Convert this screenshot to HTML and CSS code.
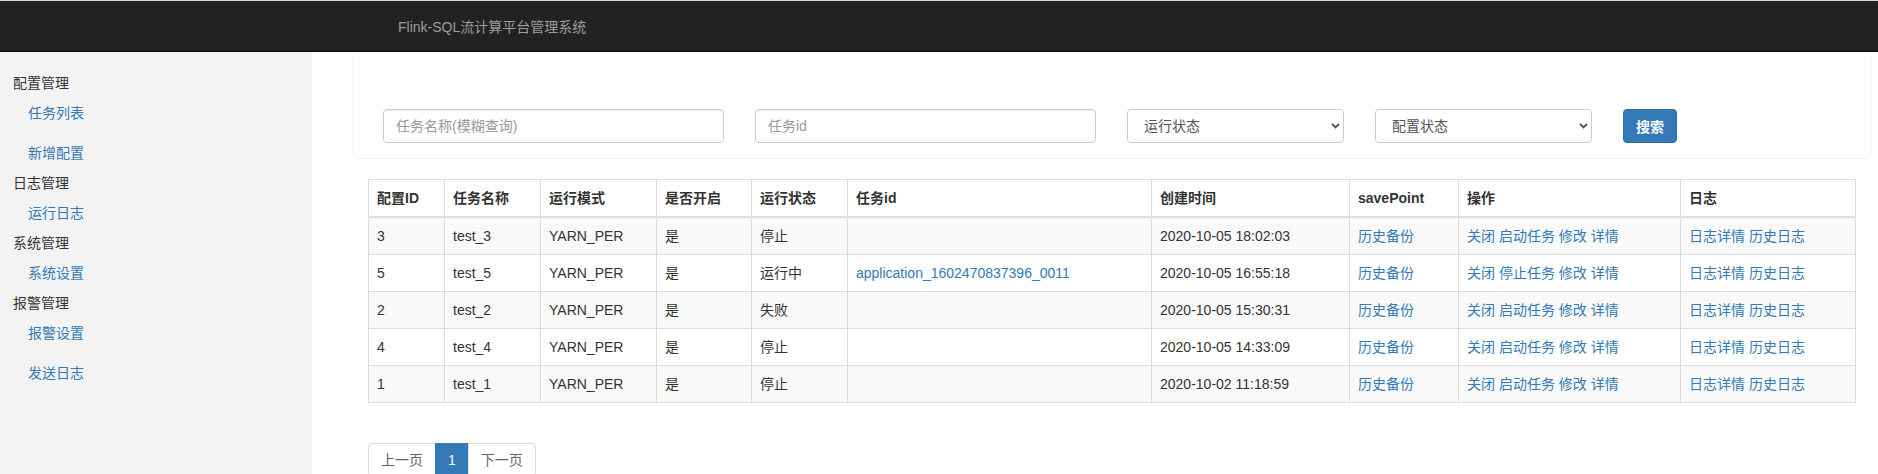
FILE: index.html
```html
<!DOCTYPE html>
<html lang="zh-CN">
<head>
<meta charset="utf-8">
<title>Flink-SQL流计算平台管理系统</title>
<link rel="stylesheet" href="styles.css">
</head>
<body>
<header class="navbar">
  <span class="brand">Flink-SQL流计算平台管理系统</span>
</header>
<div class="layout">
  <aside class="sidebar">
    <div class="group">
      <div class="group-title">配置管理</div>
      <ul class="links">
        <li><a href="#">任务列表</a></li>
        <li><a href="#">新增配置</a></li>
      </ul>
    </div>
    <div class="group">
      <div class="group-title">日志管理</div>
      <ul class="links">
        <li><a href="#">运行日志</a></li>
      </ul>
    </div>
    <div class="group">
      <div class="group-title">系统管理</div>
      <ul class="links">
        <li><a href="#">系统设置</a></li>
      </ul>
    </div>
    <div class="group">
      <div class="group-title">报警管理</div>
      <ul class="links">
        <li><a href="#">报警设置</a></li>
        <li><a href="#">发送日志</a></li>
      </ul>
    </div>
  </aside>
  <main class="main">
    <form class="search-panel">
      <input class="field field-wide" type="text" placeholder="任务名称(模糊查询)">
      <input class="field field-wide" type="text" placeholder="任务id">
      <div class="select-wrap">
        <select class="field field-select"><option>运行状态</option></select>
        <svg class="chevron" width="9" height="6" viewBox="0 0 9 6"><path d="M1 1 L4.5 4.5 L8 1" fill="none" stroke="#555" stroke-width="1.8"/></svg>
      </div>
      <div class="select-wrap">
        <select class="field field-select"><option>配置状态</option></select>
        <svg class="chevron" width="9" height="6" viewBox="0 0 9 6"><path d="M1 1 L4.5 4.5 L8 1" fill="none" stroke="#555" stroke-width="1.8"/></svg>
      </div>
      <button class="btn-primary" type="button">搜索</button>
    </form>

    <table class="task-table">
      <colgroup>
        <col style="width:76px"><col style="width:96px"><col style="width:116px"><col style="width:95px"><col style="width:96px"><col style="width:304px"><col style="width:198px"><col style="width:109px"><col style="width:222px"><col style="width:175px">
      </colgroup>
      <thead>
        <tr><th>配置ID</th><th>任务名称</th><th>运行模式</th><th>是否开启</th><th>运行状态</th><th>任务id</th><th>创建时间</th><th>savePoint</th><th>操作</th><th>日志</th></tr>
      </thead>
      <tbody>
        <tr><td>3</td><td>test_3</td><td>YARN_PER</td><td>是</td><td>停止</td><td></td><td>2020-10-05 18:02:03</td><td><a href="#">历史备份</a></td><td><a href="#">关闭</a> <a href="#">启动任务</a> <a href="#">修改</a> <a href="#">详情</a></td><td><a href="#">日志详情</a> <a href="#">历史日志</a></td></tr>
        <tr><td>5</td><td>test_5</td><td>YARN_PER</td><td>是</td><td>运行中</td><td><a href="#">application_1602470837396_0011</a></td><td>2020-10-05 16:55:18</td><td><a href="#">历史备份</a></td><td><a href="#">关闭</a> <a href="#">停止任务</a> <a href="#">修改</a> <a href="#">详情</a></td><td><a href="#">日志详情</a> <a href="#">历史日志</a></td></tr>
        <tr><td>2</td><td>test_2</td><td>YARN_PER</td><td>是</td><td>失败</td><td></td><td>2020-10-05 15:30:31</td><td><a href="#">历史备份</a></td><td><a href="#">关闭</a> <a href="#">启动任务</a> <a href="#">修改</a> <a href="#">详情</a></td><td><a href="#">日志详情</a> <a href="#">历史日志</a></td></tr>
        <tr><td>4</td><td>test_4</td><td>YARN_PER</td><td>是</td><td>停止</td><td></td><td>2020-10-05 14:33:09</td><td><a href="#">历史备份</a></td><td><a href="#">关闭</a> <a href="#">启动任务</a> <a href="#">修改</a> <a href="#">详情</a></td><td><a href="#">日志详情</a> <a href="#">历史日志</a></td></tr>
        <tr><td>1</td><td>test_1</td><td>YARN_PER</td><td>是</td><td>停止</td><td></td><td>2020-10-02 11:18:59</td><td><a href="#">历史备份</a></td><td><a href="#">关闭</a> <a href="#">启动任务</a> <a href="#">修改</a> <a href="#">详情</a></td><td><a href="#">日志详情</a> <a href="#">历史日志</a></td></tr>
      </tbody>
    </table>

    <ul class="pagination">
      <li><a href="#">上一页</a></li>
      <li class="active"><a href="#">1</a></li>
      <li><a href="#">下一页</a></li>
    </ul>
  </main>
</div>
</body>
</html>
```

FILE: styles.css
```css
* { box-sizing: border-box; }

html, body {
  margin: 0;
  padding: 0;
}

body {
  font-family: "Liberation Sans", "Noto Sans CJK SC", sans-serif;
  font-size: 14px;
  line-height: 20px;
  color: #333;
  background: #fff;
  overflow: hidden;
}

a {
  color: #337ab7;
  text-decoration: none;
}

.navbar {
  height: 52px;
  background: #222;
  border-top: 1px solid #d6d6d6;
  border-bottom: 1px solid #080808;
  display: flex;
  align-items: center;
  padding-left: 398px;
}

.brand {
  color: #9d9d9d;
  font-size: 14px;
  line-height: 20px;
  margin-top: 2px;
}

.layout {
  display: flex;
  min-height: calc(100vh - 52px);
}

.sidebar {
  width: 312px;
  flex: 0 0 312px;
  background: #f3f3f3;
  padding-top: 16px;
}

.group-title {
  padding: 5px 0 5px 13px;
  color: #333;
}

.links {
  list-style: none;
  margin: 0;
  padding: 0 0 0 28px;
}

.links li {
  padding: 5px 0;
}

.links li + li {
  margin-top: 10px;
}

.main {
  flex: 1;
  padding-left: 40px;
  padding-right: 6px;
}

.search-panel {
  display: flex;
  align-items: center;
  gap: 31px;
  margin: 0;
  padding: 57px 30px 15px 30px;
  border: 1px solid #f7f7f7;
  border-top: none;
  border-bottom-color: #efefef;
  border-radius: 0 0 5px 5px;
}

.field {
  height: 34px;
  border: 1px solid #ccc;
  border-radius: 4px;
  font-family: inherit;
  font-size: 14px;
  color: #555;
  background: #fff;
  padding: 6px 12px;
  box-shadow: inset 0 1px 1px rgba(0, 0, 0, 0.075);
}

.field::placeholder {
  color: #999;
}

.field-wide {
  width: 341px;
}

.select-wrap {
  position: relative;
  width: 217px;
}

.field-select {
  width: 100%;
  appearance: none;
  -webkit-appearance: none;
  padding-left: 16px;
  box-shadow: none;
}

.chevron {
  position: absolute;
  right: 4px;
  top: 14px;
  pointer-events: none;
}

.btn-primary {
  width: 54px;
  height: 34px;
  background: #337ab7;
  border: 1px solid #2e6da4;
  border-radius: 4px;
  color: #fff;
  font-family: inherit;
  font-size: 14px;
  font-weight: bold;
  padding: 6px 12px;
}

.task-table {
  width: 1487px;
  margin: 20px 0 0 16px;
  border-collapse: collapse;
  table-layout: fixed;
  border: 1px solid #ddd;
}

.task-table th,
.task-table td {
  border: 1px solid #ddd;
  padding: 8px;
  text-align: left;
  white-space: nowrap;
  overflow: hidden;
  vertical-align: top;
}

.task-table th {
  font-weight: bold;
  border-bottom: 2px solid #ddd;
}

.task-table tbody tr:nth-child(odd) {
  background: #f9f9f9;
}

.pagination {
  display: flex;
  list-style: none;
  margin: 40px 0 0 16px;
  padding: 0;
}

.pagination li a {
  display: block;
  padding: 6px 12px;
  line-height: 20px;
  border: 1px solid #ddd;
  color: #666;
  background: #fff;
  margin-left: -1px;
}

.pagination li:first-child a {
  margin-left: 0;
  border-radius: 4px 0 0 4px;
}

.pagination li:last-child a {
  border-radius: 0 4px 4px 0;
}

.pagination li.active a {
  background: #337ab7;
  border-color: #337ab7;
  color: #fff;
}
```
